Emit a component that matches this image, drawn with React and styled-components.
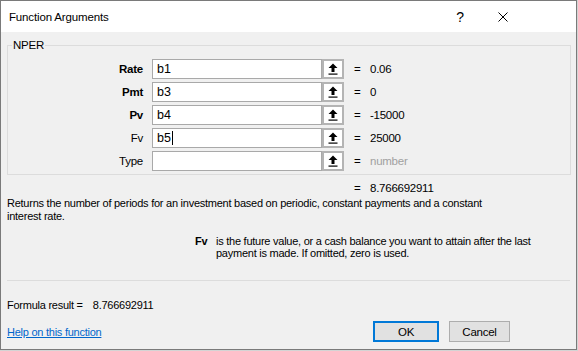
import React from "react";
import styled, { createGlobalStyle } from "styled-components";

const args = [
  { name: "Rate", value: "b1", result: "0.06", required: true },
  { name: "Pmt", value: "b3", result: "0", required: true },
  { name: "Pv", value: "b4", result: "-15000", required: true },
  { name: "Fv", value: "b5", result: "25000", caret: true },
  { name: "Type", value: "", result: "number", muted: true },
];

const GlobalStyle = createGlobalStyle`
  html, body {
    margin: 0;
    padding: 0;
    background: #d4d4d4;
  }
  body {
    font-family: "Liberation Sans", Arial, sans-serif;
    font-size: 11px;
    letter-spacing: -0.25px;
    color: #000;
  }
`;

const RefIcon = () => (
  <svg width="10" height="12" viewBox="0 0 10 12">
    <path d="M5 0.5 L9.5 5 L6.5 5 L6.5 9 L3.5 9 L3.5 5 L0.5 5 Z" fill="#000" />
    <rect x="0.5" y="10.5" width="9" height="1.2" fill="#000" />
  </svg>
);

const CloseIcon = () => (
  <svg width="10" height="10" viewBox="0 0 10 10">
    <path d="M0.5 0.5 L9.5 9.5 M9.5 0.5 L0.5 9.5" stroke="#000" strokeWidth="1" />
  </svg>
);

const App = () => {
  return (
    <>
      <GlobalStyle />
      <Window>
        <TitleBar>
          <Title>Function Arguments</Title>
          <TitleButtons>
            <HelpGlyph>?</HelpGlyph>
            <CloseButton>
              <CloseIcon />
            </CloseButton>
          </TitleButtons>
        </TitleBar>

        <Body>
          <Group>
            <Legend>NPER</Legend>
            <ArgGrid>
              {args.map((arg) => (
                <React.Fragment key={arg.name}>
                  <ArgLabel required={arg.required}>{arg.name}</ArgLabel>
                  <ArgInput>
                    {arg.value}
                    {arg.caret && <Caret />}
                  </ArgInput>
                  <RefButton>
                    <RefFace>
                      <RefIcon />
                    </RefFace>
                  </RefButton>
                  <Equals>=</Equals>
                  <ArgValue muted={arg.muted}>{arg.result}</ArgValue>
                </React.Fragment>
              ))}
            </ArgGrid>
          </Group>

          <ResultRow>
            <Equals>=</Equals>
            <ArgValue>8.766692911</ArgValue>
          </ResultRow>

          <Description>
            Returns the number of periods for an investment based on periodic,
            constant payments and a constant interest rate.
          </Description>

          <ArgHelp>
            <ArgHelpName>Fv</ArgHelpName>
            <ArgHelpText>
              is the future value, or a cash balance you want to attain after
              the last payment is made. If omitted, zero is used.
            </ArgHelpText>
          </ArgHelp>

          <Divider />

          <FormulaResult>
            Formula result =<FormulaValue>8.766692911</FormulaValue>
          </FormulaResult>

          <Footer>
            <HelpLink href="#">Help on this function</HelpLink>
            <Buttons>
              <DialogButton primary>OK</DialogButton>
              <DialogButton>Cancel</DialogButton>
            </Buttons>
          </Footer>
        </Body>
      </Window>
    </>
  );
};

const Window = styled.div`
  width: 575px;
  height: 348px;
  border: 1px solid #7a7a7a;
  background: #f0f0f0;
  display: flex;
  flex-direction: column;
  overflow: hidden;
`;

const TitleBar = styled.div`
  height: 31px;
  background: #fff;
  display: flex;
  align-items: center;
  justify-content: space-between;
  padding-left: 8px;
`;

const Title = styled.div`
  font-size: 11.5px;
  letter-spacing: -0.15px;
  padding-top: 1px;
`;

const TitleButtons = styled.div`
  display: flex;
  align-items: center;
  height: 100%;
`;

const HelpGlyph = styled.div`
  width: 40px;
  text-align: center;
  font-size: 14px;
  padding-left: 2px;
`;

const CloseButton = styled.div`
  width: 46px;
  height: 100%;
  display: flex;
  align-items: center;
  justify-content: center;
  margin-right: 50px;
`;

const Body = styled.div`
  flex: 1;
  display: flex;
  flex-direction: column;
  padding: 5px 5px 0 6px;
`;

const Group = styled.fieldset`
  margin: 0;
  border: 1px solid #dcdcdc;
  padding: 6px 0 3px 0;
`;

const Legend = styled.legend`
  padding: 0 1px;
  margin-left: 4px;
  font-size: 11.5px;
  line-height: 16px;
`;

const ArgGrid = styled.div`
  display: grid;
  grid-template-columns: 144px 170px 22px 26px 1fr;
  grid-auto-rows: 20px;
  row-gap: 3px;
  align-items: center;
`;

const ArgLabel = styled.div`
  text-align: right;
  padding-right: 9px;
  font-weight: ${(props) => (props.required ? 700 : 400)};
  font-size: 11.5px;
`;

const ArgInput = styled.div`
  height: 20px;
  box-sizing: border-box;
  border: 1px solid #a9a9a9;
  background: #fff;
  padding-left: 4px;
  font-size: 12.5px;
  letter-spacing: 0;
  line-height: 18px;
  display: flex;
  align-items: center;
`;

const Caret = styled.span`
  display: inline-block;
  width: 1px;
  height: 14px;
  background: #000;
  margin-left: 1px;
`;

const RefButton = styled.div`
  height: 20px;
  box-sizing: border-box;
  background: #b4b4b4;
  padding: 2px;
  display: flex;
`;

const RefFace = styled.div`
  flex: 1;
  background: #fff;
  display: flex;
  align-items: center;
  justify-content: center;
`;

const Equals = styled.div`
  padding-left: 10px;
  font-size: 11.5px;
`;

const ArgValue = styled.div`
  color: ${(props) => (props.muted ? "#a0a0a0" : "#000")};
  font-size: 11.5px;
`;

const ResultRow = styled.div`
  display: grid;
  grid-template-columns: 26px 1fr;
  margin-left: 337px;
  margin-top: 5px;
  height: 16px;
  align-items: center;
`;

const Description = styled.div`
  margin-top: 1px;
  width: 500px;
  line-height: 13px;
`;

const ArgHelp = styled.div`
  display: flex;
  margin-top: 12px;
  margin-left: 188px;
  line-height: 12px;
`;

const ArgHelpName = styled.div`
  font-weight: 700;
  width: 21px;
  flex-shrink: 0;
`;

const ArgHelpText = styled.div`
  width: 345px;
`;

const Divider = styled.div`
  margin-top: 21px;
  margin-right: 1px;
  height: 1px;
  background: #dcdcdc;
`;

const FormulaResult = styled.div`
  margin-top: 18px;
  display: flex;
`;

const FormulaValue = styled.span`
  margin-left: 10px;
`;

const Footer = styled.div`
  margin-top: 10px;
  display: flex;
  align-items: center;
  justify-content: space-between;
  padding-right: 61px;
`;

const HelpLink = styled.a`
  color: #0066cc;
  text-decoration: underline;
`;

const Buttons = styled.div`
  display: flex;
  gap: 10px;
`;

const DialogButton = styled.div`
  width: ${(props) => (props.primary ? "66px" : "61px")};
  height: 21px;
  box-sizing: border-box;
  border: ${(props) => (props.primary ? "2px solid #0078d7" : "1px solid #adadad")};
  background: #e1e1e1;
  display: flex;
  align-items: center;
  justify-content: center;
  font-size: 11.5px;
`;

export default App;
